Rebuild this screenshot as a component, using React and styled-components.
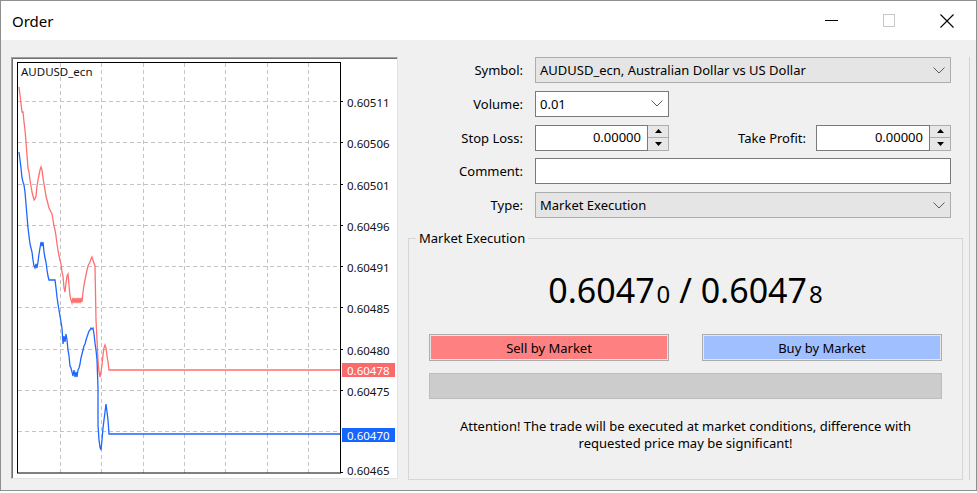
import React from "react";
import styled, { createGlobalStyle } from "styled-components";

const UI = `"Noto Sans", "Open Sans", sans-serif`;

const GlobalStyle = createGlobalStyle`
  html, body { margin: 0; padding: 0; background: #ffffff; }
  body { font-family: ${UI}; color: #000; }
  * { box-sizing: border-box; }
`;

const Window = styled.div`
  width: 977px;
  height: 491px;
  border: 1px solid #8f8f8f;
  display: flex;
  flex-direction: column;
  background: #f0f0f0;
`;

const TitleBar = styled.div`
  flex: none;
  height: 39px;
  background: #ffffff;
  display: flex;
  align-items: center;
`;

const Title = styled.div`
  flex: 1;
  padding-left: 11px;
  font-size: 15px;
  color: #000;
`;

const CaptionButton = styled.div`
  width: 58px;
  height: 39px;
  display: flex;
  align-items: center;
  justify-content: center;
`;

const Body = styled.div`
  flex: 1;
  display: flex;
  padding: 17px 0 10px 10px;
  min-height: 0;
`;

const ChartPanel = styled.div`
  flex: none;
  width: 387px;
  height: 422px;
  background: #ffffff;
  border-top: 1px solid #a0a0a0;
  border-left: 1px solid #a0a0a0;
  border-right: 1px solid #e3e3e3;
  border-bottom: 1px solid #e3e3e3;
  box-shadow: inset 1px 1px 0 #6f6f6f;
  overflow: hidden;
  display: flex;
`;

const RightColumn = styled.div`
  flex: none;
  width: 565px;
  margin-left: 7px;
  border-right: 1px solid #d2d2d2;
  display: flex;
  flex-direction: column;
  font-size: 13px;
`;

const FormGrid = styled.div`
  display: grid;
  grid-template-columns: 118px 416px;
  grid-auto-rows: 26px;
  column-gap: 12px;
  row-gap: 7.75px;
`;

const Label = styled.div`
  text-align: right;
  align-self: center;
  white-space: nowrap;
`;

const Select = styled.div`
  display: flex;
  align-items: center;
  height: 100%;
  width: ${(p) => (p.$w ? `${p.$w}px` : "100%")};
  border: 1px solid ${(p) => (p.$white ? "#7a7a7a" : "#adadad")};
  background: ${(p) => (p.$white ? "#ffffff" : "#e5e5e5")};
  padding-left: 4px;
`;

const SelectText = styled.span`
  flex: 1;
  white-space: nowrap;
`;

const Chevron = styled.svg`
  flex: none;
  margin-right: 5px;
`;

const TextField = styled.div`
  height: 100%;
  width: 100%;
  background: #ffffff;
  border: 1px solid #7a7a7a;
`;

const StopsRow = styled.div`
  display: flex;
  height: 100%;
  align-items: stretch;
`;

const InlineLabel = styled.div`
  flex: 1;
  text-align: right;
  align-self: center;
  padding-right: 10px;
  white-space: nowrap;
`;

const SpinBox = styled.div`
  display: flex;
  width: ${(p) => p.$w}px;
  height: 100%;
`;

const NumField = styled.div`
  flex: 1;
  background: #ffffff;
  border: 1px solid #7a7a7a;
  text-align: right;
  padding-right: 6px;
  line-height: 23px;
`;

const Spinner = styled.div`
  width: 21px;
  display: flex;
  flex-direction: column;
  border: 1px solid #adadad;
  border-left: none;
  background: #e7e7e7;
`;

const SpinHalf = styled.div`
  flex: 1;
  display: flex;
  align-items: center;
  justify-content: center;
  & + & {
    border-top: 1px solid #adadad;
  }
`;

const Group = styled.fieldset`
  margin: 12px 0 0 3px;
  width: 555px;
  flex: 1;
  min-width: 0;
  padding: 0;
  border: 1px solid #d6d6d6;
`;

const Legend = styled.legend`
  margin-left: 7px;
  padding: 0 3px;
  line-height: 17px;
  font-size: 13px;
`;

const GroupBody = styled.div`
  padding: 0 20px;
  display: flex;
  flex-direction: column;
`;

const Quote = styled.div`
  margin-top: 23px;
  text-align: center;
  font-size: 34px;
  line-height: 40px;
  white-space: nowrap;
`;

const Small = styled.span`
  font-size: 24px;
  margin-left: 2px;
`;

const ButtonRow = styled.div`
  margin-top: 20px;
  display: flex;
  justify-content: space-between;
`;

const TradeButton = styled.div`
  width: 240px;
  height: 27px;
  border: 1px solid #adadad;
  box-shadow: inset 0 0 0 1px #e6e6e6;
  background: ${(p) => p.$bg};
  display: flex;
  align-items: center;
  justify-content: center;
  font-size: 13px;
`;

const ProgressBar = styled.div`
  margin-top: 12px;
  height: 26px;
  background: #cccccc;
  border: 1px solid #bdbdbd;
`;

const Notice = styled.div`
  margin-top: 19px;
  text-align: center;
  line-height: 17px;
  font-size: 13px;
`;

const ChartSvg = styled.svg`
  display: block;
  font-family: ${UI};
`;

const red = [
  [19, 87], [20, 95], [21, 104], [22, 112], [23, 112], [24, 122], [25, 130], [26, 142], [27, 155], [28, 168],
  [29, 172], [30, 180], [31, 186], [32, 192], [33, 196], [34, 200], [35, 199], [36, 196], [37, 186], [38, 180],
  [39, 175], [40, 170], [41, 167], [42, 170], [43, 178], [44, 184], [45, 190], [46, 196], [47, 200], [48, 204],
  [49, 208], [50, 210], [51, 212], [52, 214], [53, 220], [54, 226], [55, 230], [56, 236], [57, 244], [58, 250],
  [59, 256], [60, 260], [61, 264], [62, 272], [63, 276], [64, 288], [65, 292], [66, 283], [67, 276], [68, 274],
  [69, 285], [70, 296], [71, 300], [72, 303], [73, 298], [74, 303], [75, 298], [76, 303], [77, 298], [78, 303],
  [79, 298], [80, 303], [81, 298], [82, 302], [83, 292], [84, 285], [85, 280], [86, 275], [87, 270], [88, 266],
  [89, 264], [90, 262], [91, 259], [92, 257], [93, 260], [94, 263], [95, 266], [96, 320], [97, 340], [98, 360],
  [99, 372], [100, 377], [101, 372], [102, 365], [103, 355], [104, 348], [105, 345], [106, 348], [107, 356],
  [108, 362], [109, 370], [340, 370],
];

const blue = [
  [19, 152], [20, 160], [21, 168], [22, 178], [23, 182], [24, 185], [25, 192], [26, 204], [27, 216], [28, 228],
  [29, 236], [30, 244], [31, 248], [32, 252], [33, 260], [34, 266], [35, 268], [36, 264], [37, 268], [38, 262],
  [39, 254], [40, 248], [41, 242], [42, 246], [43, 242], [44, 252], [45, 258], [46, 262], [47, 270], [48, 276],
  [49, 280], [55, 280], [56, 288], [57, 297], [58, 304], [59, 310], [60, 316], [61, 322], [62, 328], [63, 344],
  [64, 336], [65, 342], [66, 334], [67, 340], [68, 350], [69, 356], [70, 366], [71, 368], [72, 372], [73, 376],
  [74, 370], [75, 377], [76, 372], [77, 377], [78, 370], [79, 368], [80, 364], [81, 358], [82, 354], [83, 350],
  [84, 346], [85, 344], [86, 340], [87, 337], [88, 334], [89, 331], [90, 330], [91, 328], [92, 329], [93, 328],
  [94, 334], [95, 343], [96, 350], [97, 360], [98, 388], [98, 425], [99, 440], [100, 447], [101, 450], [102, 440],
  [103, 428], [104, 420], [105, 412], [106, 404], [107, 412], [108, 420], [109, 434], [340, 434],
];

const scale = [
  ["0.60511", 101],
  ["0.60506", 142],
  ["0.60501", 184],
  ["0.60496", 225],
  ["0.60491", 266],
  ["0.60485", 307],
  ["0.60480", 349],
  ["0.60475", 390],
];

const gridY = Array.from({ length: 9 }, (_, k) => Math.round(101 + k * 41.25));
const gridX = Array.from({ length: 7 }, (_, k) => Math.round(18.7 + (k + 1) * 41.3));

const pts = (arr) => arr.map(([x, y]) => `${x},${y}`).join(" ");

function Chart() {
  return (
    <ChartSvg width="385" height="420" viewBox="12 58 385 420">
      {gridY.map((y) => (
        <line key={`h${y}`} x1="18" x2="340" y1={y + 0.5} y2={y + 0.5} stroke="#c4c4c4" strokeDasharray="4 3" />
      ))}
      {gridX.map((x) => (
        <line key={`v${x}`} x1={x + 0.5} x2={x + 0.5} y1="63" y2="473" stroke="#c4c4c4" strokeDasharray="4 3" />
      ))}
      <polyline points={pts(red)} fill="none" stroke="#ff7070" strokeWidth="1.3" />
      <polyline points={pts(blue)} fill="none" stroke="#1f66ff" strokeWidth="1.3" />
      <rect x="17.5" y="62.5" width="323" height="410.5" fill="none" stroke="#000" />
      <text x="21" y="71" fontSize="11.5" dominantBaseline="central" fill="#111">AUDUSD_ecn</text>
      {scale.map(([t, y]) => (
        <g key={t}>
          <line x1="341" x2="343" y1={y + 0.5} y2={y + 0.5} stroke="#000" />
          <text x="347" y={y + 1} fontSize="11.5" dominantBaseline="central" fill="#111">{t}</text>
        </g>
      ))}
      <line x1="341" x2="343" y1="472.5" y2="472.5" stroke="#000" />
      <text x="347" y="470" fontSize="11.5" dominantBaseline="central" fill="#111">0.60465</text>
      <rect x="342" y="363" width="53" height="14" fill="#fa6a6a" />
      <text x="347" y="370.5" fontSize="11.5" dominantBaseline="central" fill="#fff">0.60478</text>
      <rect x="342" y="428" width="53" height="14" fill="#1565ff" />
      <text x="347" y="435.5" fontSize="11.5" dominantBaseline="central" fill="#fff">0.60470</text>
    </ChartSvg>
  );
}

const ChevronIcon = () => (
  <Chevron width="12" height="7" viewBox="0 0 12 7">
    <path d="M0.5 0.5 L6 6 L11.5 0.5" fill="none" stroke="#5a5a5a" strokeWidth="1" />
  </Chevron>
);

const Spin = ({ w, value }) => (
  <SpinBox $w={w}>
    <NumField>{value}</NumField>
    <Spinner>
      <SpinHalf>
        <svg width="7" height="4" viewBox="0 0 7 4"><path d="M0 4 H7 L3.5 0 Z" fill="#000" /></svg>
      </SpinHalf>
      <SpinHalf>
        <svg width="7" height="4" viewBox="0 0 7 4"><path d="M0 0 H7 L3.5 4 Z" fill="#000" /></svg>
      </SpinHalf>
    </Spinner>
  </SpinBox>
);

export default function App() {
  return (
    <>
      <GlobalStyle />
      <Window>
        <TitleBar>
          <Title>Order</Title>
          <CaptionButton>
            <svg width="13" height="13" viewBox="0 0 13 13"><line x1="0" x2="13" y1="6.5" y2="6.5" stroke="#000" /></svg>
          </CaptionButton>
          <CaptionButton>
            <svg width="13" height="13" viewBox="0 0 13 13"><rect x="0.5" y="0.5" width="11" height="12" fill="none" stroke="#c8c8c8" /></svg>
          </CaptionButton>
          <CaptionButton>
            <svg width="14" height="14" viewBox="0 0 14 14"><path d="M0.5 0.5 L13.5 13.5 M13.5 0.5 L0.5 13.5" stroke="#000" strokeWidth="1.1" /></svg>
          </CaptionButton>
        </TitleBar>
        <Body>
          <ChartPanel>
            <Chart />
          </ChartPanel>
          <RightColumn>
            <FormGrid>
              <Label>Symbol:</Label>
              <Select>
                <SelectText>AUDUSD_ecn, Australian Dollar vs US Dollar</SelectText>
                <ChevronIcon />
              </Select>
              <Label>Volume:</Label>
              <Select $white $w={134}>
                <SelectText>0.01</SelectText>
                <ChevronIcon />
              </Select>
              <Label>Stop Loss:</Label>
              <StopsRow>
                <Spin w={134} value="0.00000" />
                <InlineLabel>Take Profit:</InlineLabel>
                <Spin w={135} value="0.00000" />
              </StopsRow>
              <Label>Comment:</Label>
              <TextField />
              <Label>Type:</Label>
              <Select>
                <SelectText>Market Execution</SelectText>
                <ChevronIcon />
              </Select>
            </FormGrid>
            <Group>
              <Legend>Market Execution</Legend>
              <GroupBody>
                <Quote>
                  0.6047<Small>0</Small> / 0.6047<Small>8</Small>
                </Quote>
                <ButtonRow>
                  <TradeButton $bg="#ff8080">Sell by Market</TradeButton>
                  <TradeButton $bg="#a0bfff">Buy by Market</TradeButton>
                </ButtonRow>
                <ProgressBar />
                <Notice>
                  Attention! The trade will be executed at market conditions, difference with
                  <br />
                  requested price may be significant!
                </Notice>
              </GroupBody>
            </Group>
          </RightColumn>
        </Body>
      </Window>
    </>
  );
}
